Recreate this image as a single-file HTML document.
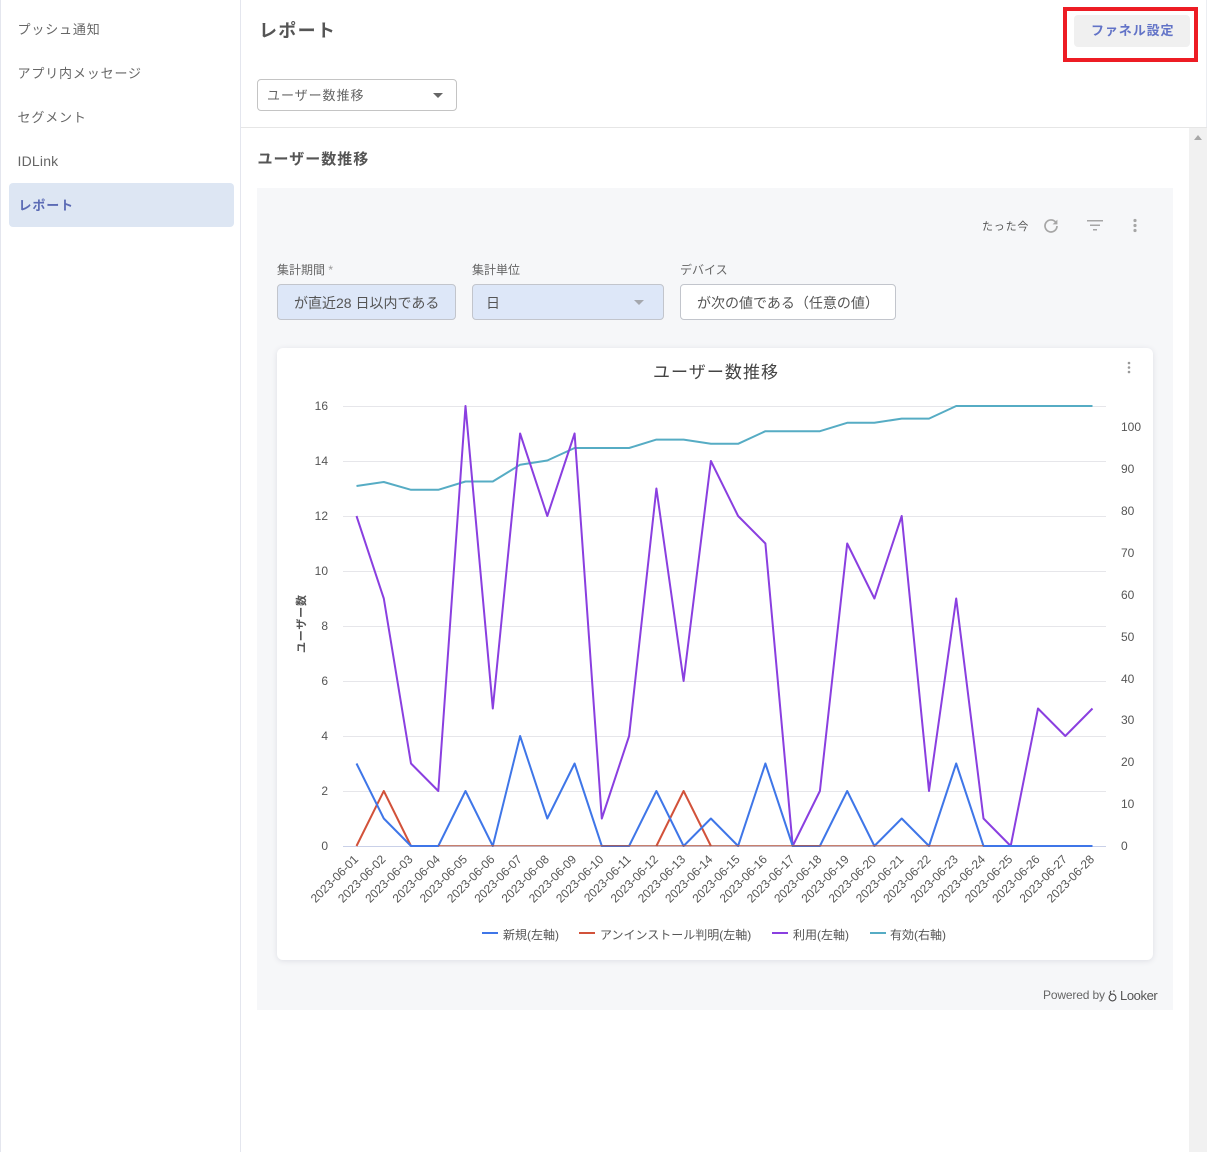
<!DOCTYPE html>
<html lang="ja">
<head>
<meta charset="utf-8">
<style>
html,body{margin:0;padding:0;background:#fff}
body{position:relative;width:1207px;height:1152px;overflow:hidden;font-family:"Liberation Sans","Noto Sans CJK JP",sans-serif;color:#555}
.a{position:absolute;white-space:nowrap}
.nav{left:17.500px;font-size:13px;letter-spacing:.85px;line-height:20px;color:#666}
.lab{font-size:12px;line-height:16px;top:262px;color:#666}
.f{top:284px;height:36px;box-sizing:border-box;border:1px solid #c2c5cc;border-radius:4px;font-size:14px;line-height:36px;color:#555;padding-left:16px}
svg text{font-family:"Liberation Sans","Noto Sans CJK JP",sans-serif}
</style>
</head>
<body>
<div class="a" style="left:0;top:0;width:1px;height:1152px;background:#e4e6ee"></div>
<div class="a" style="left:240px;top:0;width:1px;height:1152px;background:#e4e6ee"></div>
<div class="a" style="left:1206px;top:0;width:1px;height:127px;background:#eceef2"></div>
<div class="a nav" style="top:20px">プッシュ通知</div>
<div class="a nav" style="top:64px">アプリ内メッセージ</div>
<div class="a nav" style="top:108px">セグメント</div>
<div class="a nav" style="top:151px;font-size:14px;letter-spacing:.2px">IDLink</div>
<div class="a" style="left:9px;top:183px;width:225px;height:44px;background:#dde6f3;border-radius:4px"></div>
<div class="a nav" style="left:18.500px;top:196px;font-weight:700;color:#5b6bb5">レポート</div>

<div class="a" style="left:259px;top:18px;font-size:18px;line-height:26px;letter-spacing:1.300px;font-weight:700;color:#555">レポート</div>
<div class="a" style="left:1063px;top:7px;width:135px;height:55px;box-sizing:border-box;border:4px solid #ed1c24"></div>
<div class="a" style="left:1074px;top:15px;width:116px;height:32px;background:#f0f0f0;border-radius:4px"></div>
<div class="a" style="left:1091px;top:21px;font-size:13px;line-height:20px;letter-spacing:.9px;font-weight:700;color:#6273c7">ファネル設定</div>

<div class="a" style="left:257px;top:79px;width:200px;height:32px;box-sizing:border-box;border:1px solid #c4c4c4;border-radius:4px;background:#fff"></div>
<div class="a" style="left:267px;top:86px;font-size:13px;line-height:20px;letter-spacing:.95px;color:#666">ユーザー数推移</div>
<div class="a" style="left:433px;top:93px;width:0;height:0;border-left:5px solid transparent;border-right:5px solid transparent;border-top:5px solid #666"></div>
<div class="a" style="left:241px;top:127px;width:966px;height:1px;background:#e6e6e6"></div>

<div class="a" style="left:1189px;top:128px;width:18px;height:1024px;background:#f1f1f1"></div>
<div class="a" style="left:1194px;top:135px;width:0;height:0;border-left:4px solid transparent;border-right:4px solid transparent;border-bottom:5px solid #a8a8a8"></div>

<div class="a" style="left:257.500px;top:149px;font-size:15px;line-height:22px;letter-spacing:1px;font-weight:700;color:#555">ユーザー数推移</div>

<div class="a" style="left:257px;top:188px;width:916px;height:822px;background:#f6f7f9"></div>

<div class="a" style="left:982px;top:219px;font-size:11px;line-height:16px;letter-spacing:.8px;color:#555">たった今</div>
<svg class="a" style="left:1040px;top:214px" width="110" height="24" viewBox="0 0 110 24" fill="none">
<path d="M15.7 8.2A6 6 0 1 0 17 12" stroke="#a6a6a6" stroke-width="1.7"/>
<path d="M17.4 5.6v4.8h-4.8z" fill="#a6a6a6"/>
<rect x="47" y="6" width="16" height="1.5" fill="#a6a6a6"/>
<rect x="50" y="10.5" width="10" height="1.5" fill="#a6a6a6"/>
<rect x="53" y="15" width="4" height="1.5" fill="#a6a6a6"/>
<circle cx="95" cy="6.5" r="1.6" fill="#a6a6a6"/><circle cx="95" cy="11.500" r="1.6" fill="#a6a6a6"/><circle cx="95" cy="16.500" r="1.6" fill="#a6a6a6"/>
</svg>

<div class="a lab" style="left:277px">集計期間 <span style="color:#999">*</span></div>
<div class="a lab" style="left:472px">集計単位</div>
<div class="a lab" style="left:680px">デバイス</div>
<div class="a f" style="left:277px;width:179px;background:#dde7f8">が直近28 日以内である</div>
<div class="a f" style="left:472px;width:192px;background:#dde7f8;padding-left:13px">日</div>
<div class="a" style="left:634px;top:300px;width:0;height:0;border-left:5px solid transparent;border-right:5px solid transparent;border-top:5px solid #a5a8ae"></div>
<div class="a f" style="left:680px;width:216px;background:#fff">が次の値である（任意の値）</div>

<div class="a" style="left:277px;top:348px;width:876px;height:612px;background:#fff;border-radius:6px;box-shadow:0 1px 6px rgba(60,64,90,.13)"></div>

<svg class="a" style="left:0;top:0" width="1207" height="1152" viewBox="0 0 1207 1152" fill="none">
<text x="715.500" y="378" font-size="17" text-anchor="middle" textLength="125" fill="#444">ユーザー数推移</text>
<circle cx="1129" cy="363" r="1.300" fill="#999"/><circle cx="1129" cy="367.500" r="1.300" fill="#999"/><circle cx="1129" cy="372" r="1.300" fill="#999"/>

<g stroke="#e6e6ea" stroke-width="1">
<path d="M343 406.500H1106M343 461.500H1106M343 516.500H1106M343 571.500H1106M343 626.500H1106M343 681.500H1106M343 736.500H1106M343 791.500H1106"/>
</g>
<path d="M343 846.500H1106" stroke="#c9d0e8" stroke-width="1"/>

<g font-size="12" fill="#555" text-anchor="end">
<text x="328" y="410">16</text><text x="328" y="465">14</text><text x="328" y="520">12</text><text x="328" y="575">10</text><text x="328" y="630">8</text><text x="328" y="685">6</text><text x="328" y="740">4</text><text x="328" y="795">2</text><text x="328" y="850">0</text>
</g>
<g font-size="12" fill="#555">
<text x="1121" y="431">100</text><text x="1121" y="473">90</text><text x="1121" y="515">80</text><text x="1121" y="557">70</text><text x="1121" y="599">60</text><text x="1121" y="641">50</text><text x="1121" y="683">40</text><text x="1121" y="724">30</text><text x="1121" y="766">20</text><text x="1121" y="808">10</text><text x="1121" y="850">0</text>
</g>
<text transform="translate(305 624) rotate(-90)" font-size="11" font-weight="700" text-anchor="middle" textLength="58" fill="#555">ユーザー数</text>

<g stroke-width="2" stroke-linejoin="round" transform="translate(-.5 0)">
<polyline stroke="#56acc4" points="357,486 384.300,482 411.500,489.800 438.800,489.800 466,481.500 493.300,481.500 520.600,464.700 547.800,460.500 575.100,448 602.300,448 629.600,448 656.900,439.600 684.100,439.600 711.400,443.800 738.600,443.800 765.900,431.200 793.200,431.200 820.400,431.200 847.700,422.800 874.900,422.800 902.200,418.600 929.500,418.600 956.700,406 984,406 1011.200,406 1038.500,406 1065.800,406 1093,406"/>
<polyline stroke="#8a3fe0" points="357,516 384.300,598.500 411.500,763.500 438.800,791 466,406 493.300,708.500 520.600,433.500 547.800,516 575.100,433.500 602.300,818.500 629.600,736 656.900,488.500 684.100,681 711.400,461 738.600,516 765.900,543.500 793.200,846 820.400,791 847.700,543.500 874.900,598.500 902.200,516 929.500,791 956.700,598.500 984,818.500 1011.200,846 1038.500,708.500 1065.800,736 1093,708.500"/>
<polyline stroke="#d2523a" points="357,846 384.300,791 411.500,846"/>
<polyline stroke="#d2523a" points="656.900,846 684.100,791 711.400,846"/>
<polyline stroke="#3f76e8" points="357,763.500 384.300,818.500 411.500,846 438.800,846 466,791 493.300,846 520.600,736 547.800,818.500 575.100,763.500 602.300,846 629.600,846 656.900,791 684.100,846 711.400,818.500 738.600,846 765.900,763.500 793.200,846 820.400,846 847.700,791 874.900,846 902.200,818.500 929.500,846 956.700,763.500 984,846 1011.200,846 1038.500,846 1065.800,846 1093,846"/>
<path d="M438.800 845.700H984" stroke="#b5563f" stroke-width="1"/>
</g>

<g font-size="12" fill="#555" text-anchor="end">
<text transform="translate(359 860) rotate(-45)">2023-06-01</text>
<text transform="translate(386.300 860) rotate(-45)">2023-06-02</text>
<text transform="translate(413.500 860) rotate(-45)">2023-06-03</text>
<text transform="translate(440.800 860) rotate(-45)">2023-06-04</text>
<text transform="translate(468 860) rotate(-45)">2023-06-05</text>
<text transform="translate(495.300 860) rotate(-45)">2023-06-06</text>
<text transform="translate(522.600 860) rotate(-45)">2023-06-07</text>
<text transform="translate(549.800 860) rotate(-45)">2023-06-08</text>
<text transform="translate(577.100 860) rotate(-45)">2023-06-09</text>
<text transform="translate(604.300 860) rotate(-45)">2023-06-10</text>
<text transform="translate(631.600 860) rotate(-45)">2023-06-11</text>
<text transform="translate(658.900 860) rotate(-45)">2023-06-12</text>
<text transform="translate(686.100 860) rotate(-45)">2023-06-13</text>
<text transform="translate(713.400 860) rotate(-45)">2023-06-14</text>
<text transform="translate(740.600 860) rotate(-45)">2023-06-15</text>
<text transform="translate(767.900 860) rotate(-45)">2023-06-16</text>
<text transform="translate(795.200 860) rotate(-45)">2023-06-17</text>
<text transform="translate(822.400 860) rotate(-45)">2023-06-18</text>
<text transform="translate(849.700 860) rotate(-45)">2023-06-19</text>
<text transform="translate(876.900 860) rotate(-45)">2023-06-20</text>
<text transform="translate(904.200 860) rotate(-45)">2023-06-21</text>
<text transform="translate(931.500 860) rotate(-45)">2023-06-22</text>
<text transform="translate(958.700 860) rotate(-45)">2023-06-23</text>
<text transform="translate(986 860) rotate(-45)">2023-06-24</text>
<text transform="translate(1013.200 860) rotate(-45)">2023-06-25</text>
<text transform="translate(1040.500 860) rotate(-45)">2023-06-26</text>
<text transform="translate(1067.800 860) rotate(-45)">2023-06-27</text>
<text transform="translate(1095 860) rotate(-45)">2023-06-28</text>
</g>

<g stroke-width="2">
<path d="M482 933H498" stroke="#3f76e8"/>
<path d="M579 933H595" stroke="#d2523a"/>
<path d="M772 933H788" stroke="#8a3fe0"/>
<path d="M870 933H886" stroke="#56acc4"/>
</g>
<g font-size="12" fill="#555">
<text x="503" y="939">新規(左軸)</text>
<text x="600" y="939">アンインストール判明(左軸)</text>
<text x="793" y="939">利用(左軸)</text>
<text x="890" y="939">有効(右軸)</text>
</g>

<text x="1043" y="999" font-size="12" fill="#666" textLength="62">Powered by</text>
<g stroke="#444" stroke-width="1.100">
<circle cx="1112.500" cy="997.500" r="3.400"/>
<path d="M1111 994c-1.300-1-1-2.500.2-3M1113 991h1.800"/>
</g>
<text x="1120" y="1000" font-size="13" fill="#555" letter-spacing="-.4">Looker</text>
</svg>
</body>
</html>
